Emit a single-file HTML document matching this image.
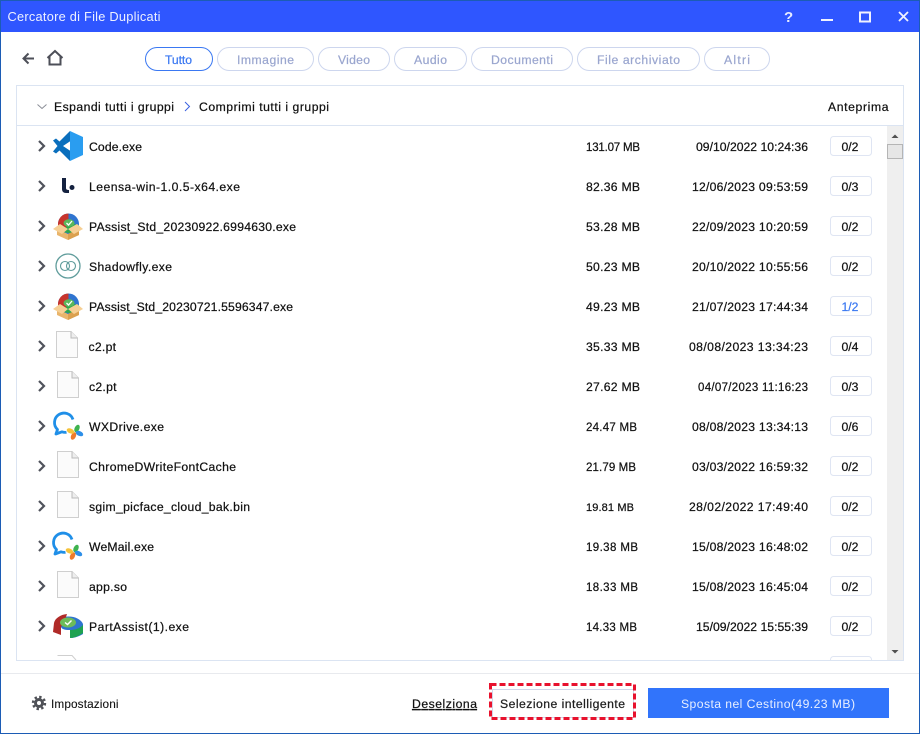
<!DOCTYPE html>
<html><head><meta charset="utf-8"><style>
html,body{margin:0;padding:0;background:#fff;width:920px;height:734px;overflow:hidden}
svg{display:block}
text{font-family:"Liberation Sans",sans-serif;font-size:12.2px;fill:#111;stroke:#111;stroke-width:.22}
.t{fill:#9aa6cf;stroke:#9aa6cf}
</style></head><body>
<svg width="920" height="734" viewBox="0 0 920 734" xmlns="http://www.w3.org/2000/svg">
<defs>
<g id="chev"><path d="M-3-5 2 0-3 5" fill="none" stroke="#50535c" stroke-width="2.200"/></g>
<g id="file"><path d="M-10.500-14.500H4L10.500-8V11.500H-10.500Z" fill="#fbfbfb" stroke="#cfcfcf"/><path d="M4-14.500V-8H10.500" fill="#eee" stroke="#bbb"/></g>
<g id="box">
<circle cx=".5" cy="-2" r="10.500" fill="#2f74d0"/>
<path d="M.5-12.500A10.500 10.500 0 0 0-10-2C-10 2-8 5-5 6L.5 1Z" fill="#c8342c"/>
<path d="M-5 6 .5-3 11-1C10.500 3 9 6 6 8Z" fill="#2da84f"/>
<ellipse cx="1" cy="-3" rx="5.500" ry="3.700" fill="#5cb85c"/>
<path d="M-1.500-3 .5-1 4-5" fill="none" stroke="#fff" stroke-width="1.300"/>
<path d="M-11 3 0 8 11 3V9L0 14-11 9Z" fill="#e9b56c"/>
<path d="M0 8 11 3V9L0 14Z" fill="#dba04f"/>
<path d="M-8-2-15 3-6 8 0 3Z" fill="#f6cf94"/>
<path d="M9-2 15 3 6 8 0 3Z" fill="#f6cf94"/>
</g>
<g id="chat">
<path d="M6-6.500A9.500 9.500 0 1 0-9.500 3.500L-11 8-5 5.800C-3.500 6.300-2 6.500-.5 6.200" fill="none" stroke="#1f8fe8" stroke-width="2.800" stroke-linejoin="round"/>
<g transform="translate(8,6)">
<ellipse cx="2" cy="-3.500" rx="2.400" ry="4" transform="rotate(25 2 -3.500)" fill="#3fb34f"/>
<ellipse cx="4.500" cy="1.500" rx="4" ry="2.400" transform="rotate(25 4.500 1.500)" fill="#2d8fe8"/>
<ellipse cx="-1.500" cy="4" rx="2.400" ry="4" transform="rotate(25 -1.500 4)" fill="#ee7a2c"/>
<ellipse cx="-4.500" cy="-1" rx="4" ry="2.400" transform="rotate(25 -4.500 -1)" fill="#f5c33b"/>
</g>
</g>
</defs>

<rect width="920" height="734" fill="#1c5cb5"/>
<rect x="1" y="1" width="918" height="732" fill="#fff"/>
<rect x="1" y="1" width="918" height="31" fill="#2f56ff"/>
<text x="7.500" y="21" textLength="153" lengthAdjust="spacing" style="fill:#eef1ff;stroke:none;font-size:12.800px">Cercatore di File Duplicati</text>
<text x="784" y="22" style="fill:#e8ecff;stroke:none;font-size:15px;font-weight:bold">?</text>
<rect x="821" y="19" width="12" height="2" fill="#f0f2ff"/>
<rect x="860" y="12.500" width="10" height="9" fill="none" stroke="#f0f2ff" stroke-width="2"/>
<path d="M899 12 908 21M908 12 899 21" stroke="#f0f2ff" stroke-width="1.800"/>

<!-- nav -->
<path d="M34 58.500H24M28.500 53.500 23.500 58.500 28.500 63.500" fill="none" stroke="#4d4f58" stroke-width="2"/>
<path d="M47.500 58 55 51 62.500 58M49.500 56.500V64.500H60.500V56.500" fill="none" stroke="#4d4f58" stroke-width="2"/>

<!-- tabs -->
<g fill="#fff" stroke="#cdd6ee">
<rect x="145.500" y="47.500" width="67" height="23" rx="11.500" stroke="#3a78f2"/>
<rect x="217.500" y="47.500" width="96" height="23" rx="11.500"/>
<rect x="318.500" y="47.500" width="71" height="23" rx="11.500"/>
<rect x="394.500" y="47.500" width="72" height="23" rx="11.500"/>
<rect x="471.500" y="47.500" width="101" height="23" rx="11.500"/>
<rect x="577.500" y="47.500" width="122" height="23" rx="11.500"/>
<rect x="704.500" y="47.500" width="65" height="23" rx="11.500"/>
</g>
<text x="165" y="64" textLength="27" lengthAdjust="spacing" style="fill:#3a78f2;stroke:#3a78f2">Tutto</text>
<text class="t" x="237" y="64" textLength="57" lengthAdjust="spacing">Immagine</text>
<text class="t" x="338" y="64" textLength="32" lengthAdjust="spacing">Video</text>
<text class="t" x="414" y="64" textLength="33" lengthAdjust="spacing">Audio</text>
<text class="t" x="491" y="64" textLength="62" lengthAdjust="spacing">Documenti</text>
<text class="t" x="597" y="64" textLength="83" lengthAdjust="spacing">File archiviato</text>
<text class="t" x="724" y="64" textLength="26" lengthAdjust="spacing">Altri</text>

<!-- panel -->
<rect x="16.500" y="85.500" width="887" height="575" fill="#fff" stroke="#dbe4f2"/>
<path d="M17 125.500H903" stroke="#dbe4f2"/>
<path d="M37.500 104.500 42 108.500 46.500 104.500" fill="none" stroke="#8a8d96"/>
<text x="54" y="111" textLength="120" lengthAdjust="spacing">Espandi tutti i gruppi</text>
<path d="M185 102 189.500 106.500 185 111" fill="none" stroke="#3a60e0"/>
<text x="199" y="111" textLength="130" lengthAdjust="spacing">Comprimi tutti i gruppi</text>
<text x="828" y="111" textLength="60.500" lengthAdjust="spacing">Anteprima</text>

<!-- scrollbar -->
<rect x="887" y="126" width="16" height="534" fill="#efefef"/>
<path d="M891.500 138 895 134.500 898.500 138Z" fill="#505050"/>
<rect x="887.500" y="144.500" width="15" height="14" fill="#e6e6e6" stroke="#b5b5b5"/>
<path d="M891.500 650 895 653.500 898.500 650Z" fill="#505050"/>

<!-- chevrons -->
<use href="#chev" x="42" y="146"/><use href="#chev" x="42" y="186"/><use href="#chev" x="42" y="226"/><use href="#chev" x="42" y="266"/><use href="#chev" x="42" y="306"/><use href="#chev" x="42" y="346"/><use href="#chev" x="42" y="386"/><use href="#chev" x="42" y="426"/><use href="#chev" x="42" y="466"/><use href="#chev" x="42" y="506"/><use href="#chev" x="42" y="546"/><use href="#chev" x="42" y="586"/><use href="#chev" x="42" y="626"/>

<!-- icons -->
<path d="M70 131 59.500 141.500 56 138.500 53 140.500 57.500 146 53 151.500 56 153.500 59.500 150.500 70 161 72 152 63 146 72 140Z" fill="#0a6fbd"/>
<path d="M70 131 83 137V155L70 161Z" fill="#2a9df0"/>
<g fill="#14213f"><path d="M62 178H66V188C66 189.500 67 190 69 190V193H66C63.500 193 62 191.500 62 189Z"/><circle cx="72" cy="187.500" r="2.500"/></g>
<use href="#box" x="68" y="226"/>
<g fill="none" stroke="#5f9c9b"><circle cx="68" cy="266" r="12" stroke-width="1.300"/><circle cx="65" cy="266" r="4.500" stroke-width="1.100"/><circle cx="71" cy="266" r="4.500" stroke-width="1.100"/></g>
<use href="#box" x="68" y="306"/>
<use href="#file" x="67" y="346"/>
<use href="#file" x="68" y="386"/>
<use href="#chat" x="67" y="426"/>
<use href="#file" x="68" y="466"/>
<use href="#file" x="68" y="506"/>
<use href="#chat" x="66" y="546"/>
<use href="#file" x="68" y="586"/>
<g transform="translate(68,626)">
<path d="M-14-2A15 10 0 0 1 15-2V8C10 11 6 12 2 12V4C-4 4-6 3-7 1V8L-14 6Z" fill="#2f74d0"/>
<path d="M-14-3C-13-8-7-11.500-1-12L-4-3-7 1V9L-15 6Z" fill="#b02a28"/>
<path d="M2 4C6 4 11 3 15-1V7C10 10.500 6 12 2 12Z" fill="#1fa251"/>
<ellipse cx="0" cy="-3.500" rx="8" ry="5" fill="#6dbb5a"/>
<path d="M-3-3.500-.5-1.500 3.500-5.500" fill="none" stroke="#fff" stroke-width="1.400"/>
</g>
<!-- clipped last row -->
<svg x="17" y="650" width="870" height="10" overflow="hidden">
<path d="M40.500 5.500H55L59 10" fill="none" stroke="#cfcfcf"/>
<rect x="813.500" y="6.500" width="41" height="18" rx="3" fill="#fff" stroke="#dfe5f3"/>
</svg>

<!-- names -->
<text x="89" y="151" textLength="53" lengthAdjust="spacing">Code.exe</text>
<text x="89" y="191" textLength="151" lengthAdjust="spacing">Leensa-win-1.0.5-x64.exe</text>
<text x="89" y="231" textLength="207" lengthAdjust="spacing">PAssist_Std_20230922.6994630.exe</text>
<text x="89" y="271" textLength="83" lengthAdjust="spacing">Shadowfly.exe</text>
<text x="89" y="311" textLength="204" lengthAdjust="spacing">PAssist_Std_20230721.5596347.exe</text>
<text x="88.500" y="351" textLength="27.500" lengthAdjust="spacing">c2.pt</text>
<text x="89" y="391" textLength="27.500" lengthAdjust="spacing">c2.pt</text>
<text x="89" y="431" textLength="75" lengthAdjust="spacing">WXDrive.exe</text>
<text x="89" y="471" textLength="147" lengthAdjust="spacing">ChromeDWriteFontCache</text>
<text x="89" y="511" textLength="161" lengthAdjust="spacing">sgim_picface_cloud_bak.bin</text>
<text x="89" y="551" textLength="65" lengthAdjust="spacing">WeMail.exe</text>
<text x="89" y="591" textLength="38" lengthAdjust="spacing">app.so</text>
<text x="89" y="631" textLength="100" lengthAdjust="spacing">PartAssist(1).exe</text>

<!-- sizes -->
<g>
<text style="font-size:11.500px" x="586" y="151" textLength="54" lengthAdjust="spacing">131.07 MB</text>
<text x="586" y="191" textLength="54" lengthAdjust="spacing">82.36 MB</text>
<text x="586" y="231" textLength="54" lengthAdjust="spacing">53.28 MB</text>
<text x="586" y="271" textLength="54" lengthAdjust="spacing">50.23 MB</text>
<text x="586" y="311" textLength="54" lengthAdjust="spacing">49.23 MB</text>
<text x="586" y="351" textLength="54" lengthAdjust="spacing">35.33 MB</text>
<text x="586" y="391" textLength="54" lengthAdjust="spacing">27.62 MB</text>
<text style="font-size:11.500px" x="586" y="431" textLength="51" lengthAdjust="spacing">24.47 MB</text>
<text style="font-size:11.500px" x="586" y="471" textLength="50" lengthAdjust="spacing">21.79 MB</text>
<text style="font-size:11px" x="586" y="511" textLength="48" lengthAdjust="spacing">19.81 MB</text>
<text style="font-size:11.500px" x="586" y="551" textLength="52" lengthAdjust="spacing">19.38 MB</text>
<text style="font-size:11.500px" x="586" y="591" textLength="52" lengthAdjust="spacing">18.33 MB</text>
<text style="font-size:11.500px" x="586" y="631" textLength="51" lengthAdjust="spacing">14.33 MB</text>
</g>

<!-- dates -->
<text x="696" y="151" textLength="112" lengthAdjust="spacing">09/10/2022 10:24:36</text>
<text x="692" y="191" textLength="116" lengthAdjust="spacing">12/06/2023 09:53:59</text>
<text x="692" y="231" textLength="116" lengthAdjust="spacing">22/09/2023 10:20:59</text>
<text x="692" y="271" textLength="116" lengthAdjust="spacing">20/10/2022 10:55:56</text>
<text x="692" y="311" textLength="116" lengthAdjust="spacing">21/07/2023 17:44:34</text>
<text x="689" y="351" textLength="119" lengthAdjust="spacing">08/08/2023 13:34:23</text>
<text style="font-size:11.500px" x="698" y="391" textLength="110" lengthAdjust="spacing">04/07/2023 11:16:23</text>
<text x="692" y="431" textLength="116" lengthAdjust="spacing">08/08/2023 13:34:13</text>
<text x="692" y="471" textLength="116" lengthAdjust="spacing">03/03/2022 16:59:32</text>
<text x="689" y="511" textLength="119" lengthAdjust="spacing">28/02/2022 17:49:40</text>
<text x="692" y="551" textLength="116" lengthAdjust="spacing">15/08/2023 16:48:02</text>
<text x="692" y="591" textLength="116" lengthAdjust="spacing">15/08/2023 16:45:04</text>
<text x="696" y="631" textLength="112" lengthAdjust="spacing">15/09/2022 15:55:39</text>

<!-- counts -->
<g fill="#fff" stroke="#dfe5f3">
<rect x="830.500" y="136.500" width="41" height="19" rx="3"/><rect x="830.500" y="176.500" width="41" height="19" rx="3"/><rect x="830.500" y="216.500" width="41" height="19" rx="3"/><rect x="830.500" y="256.500" width="41" height="19" rx="3"/><rect x="830.500" y="296.500" width="41" height="19" rx="3"/><rect x="830.500" y="336.500" width="41" height="19" rx="3"/><rect x="830.500" y="376.500" width="41" height="19" rx="3"/><rect x="830.500" y="416.500" width="41" height="19" rx="3"/><rect x="830.500" y="456.500" width="41" height="19" rx="3"/><rect x="830.500" y="496.500" width="41" height="19" rx="3"/><rect x="830.500" y="536.500" width="41" height="19" rx="3"/><rect x="830.500" y="576.500" width="41" height="19" rx="3"/><rect x="830.500" y="616.500" width="41" height="19" rx="3"/>
</g>
<g text-anchor="middle">
<text x="850" y="151">0/2</text><text x="850" y="191">0/3</text><text x="850" y="231">0/2</text><text x="850" y="271">0/2</text><text x="850" y="311" style="fill:#3a78f2;stroke:#3a78f2">1/2</text><text x="850" y="351">0/4</text><text x="850" y="391">0/3</text><text x="850" y="431">0/6</text><text x="850" y="471">0/2</text><text x="850" y="511">0/2</text><text x="850" y="551">0/2</text><text x="850" y="591">0/2</text><text x="850" y="631">0/2</text>
</g>

<!-- footer -->
<path d="M1 673.500H919" stroke="#e8eaee"/>
<g transform="translate(39,703)">
<circle r="6" fill="none" stroke="#4f5157" stroke-width="2.400" stroke-dasharray="2.400 2.310"/>
<circle r="3.500" fill="none" stroke="#4f5157" stroke-width="3"/>
</g>
<text x="51" y="708" textLength="67.500" lengthAdjust="spacing" style="font-size:11.800px;stroke-width:.1">Impostazioni</text>
<text x="412" y="708" textLength="65" lengthAdjust="spacing" text-decoration="underline">Deselziona</text>
<rect x="492.500" y="689.500" width="141" height="28" fill="#fff" stroke="#d0d6ea"/>
<rect x="490.500" y="684.500" width="144" height="34" fill="none" stroke="#e8112d" stroke-width="3" stroke-dasharray="6 3"/>
<text x="500" y="708" textLength="125" lengthAdjust="spacing" style="fill:#222">Selezione intelligente</text>
<rect x="648" y="688" width="241" height="30" fill="#3174fb"/>
<text x="681" y="708" textLength="174" lengthAdjust="spacing" style="fill:#e8efff;stroke:none">Sposta nel Cestino(49.23 MB)</text>
</svg>
</body></html>
